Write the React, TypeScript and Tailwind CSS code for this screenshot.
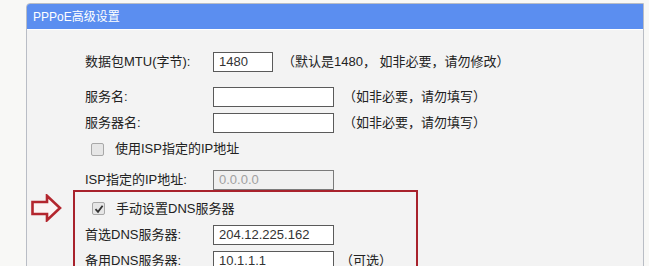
import React from "react";

const font = "font-['Liberation_Sans','Noto_Sans_CJK_SC',sans-serif]";

const TextBox = ({ value = "", width = "w-[121px]", disabled = false }: { value?: string; width?: string; disabled?: boolean }) => (
  <div
    className={`${width} h-[20px] border border-[#5a5a5a] flex items-center pl-[5px] text-[13px] ${
      disabled ? "bg-[#f0f0f0] text-[#a0a0a0] border-[#7a7a7a]" : "bg-white text-[#333]"
    }`}
  >
    {value}
  </div>
);

const CheckBox = ({ checked = false }: { checked?: boolean }) => (
  <div className="w-[13px] h-[13px] border border-[#a8a8a8] bg-[#e6e6e6] rounded-[2px] flex items-center justify-center">
    {checked && (
      <svg width="10" height="10" viewBox="0 0 10 10">
        <path d="M1.5 5.2 L4 7.8 L8.6 1.8" fill="none" stroke="#333" strokeWidth="1.8" />
      </svg>
    )}
  </div>
);

const Row = ({ label, children, h = "h-[26px]" }: { label: string; children: React.ReactNode; h?: string }) => (
  <div className={`flex items-center ${h}`}>
    <div className="w-[128px] shrink-0 text-[13px] text-[#222] whitespace-nowrap">{label}</div>
    {children}
  </div>
);

const Note = ({ text, ml = "ml-[9px]" }: { text: string; ml?: string }) => (
  <span className={`${ml} text-[13px] text-[#222] whitespace-nowrap`}>{text}</span>
);

export default function App() {
  return (
    <div className={`w-[649px] h-[266px] overflow-hidden bg-[#f8f8f6] ${font}`}>
      <div className="ml-[26px] mt-[3px] w-[618px] h-[300px] border border-[#b9bdc5] rounded-tl-[4px] bg-[#f3f3f3]">
        <div className="h-[26px] bg-[#5b8ef0] border-b border-white rounded-tl-[3px] flex items-center pl-[6px] text-[12px] text-white">
          PPPoE高级设置
        </div>

        <div className="pt-[19px]">
          <div className="pl-[58px]">
            <Row label="数据包MTU(字节):">
              <TextBox value="1480" width="w-[60px]" />
              <Note text="（默认是1480， 如非必要，请勿修改）" />
            </Row>
            <div className="h-[9px]" />
            <Row label="服务名:">
              <TextBox />
              <Note text="（如非必要，请勿填写）" />
            </Row>
            <Row label="服务器名:">
              <TextBox />
              <Note text="（如非必要，请勿填写）" />
            </Row>
            <div className="flex items-center h-[26px] pl-[6px] text-[13px] text-[#222]">
              <CheckBox />
              <span className="ml-[11px]">使用ISP指定的IP地址</span>
            </div>
            <div className="h-[7px]" />
            <Row label="ISP指定的IP地址:" h="h-[21px]">
              <TextBox value="0.0.0.0" disabled />
            </Row>
          </div>

          <div className="flex items-start">
            <svg className="ml-[4px] mt-[4px] shrink-0" width="31" height="28" viewBox="0 0 31 28">
              <path
                d="M1.5 8 H16 V1.8 L29 14 L16 26.2 V20 H1.5 Z"
                fill="#fbf4f4"
                stroke="#b3262e"
                strokeWidth="2.6"
                strokeLinejoin="miter"
              />
            </svg>
            <div className="ml-[11px] w-[345px] h-[100px] border-2 border-[#a8222c] pt-[3px] pl-[10px]">
              <div className="flex items-center h-[27px] pl-[7px] text-[13px] text-[#222]">
                <CheckBox checked />
                <span className="ml-[11px]">手动设置DNS服务器</span>
              </div>
              <Row label="首选DNS服务器:">
                <TextBox value="204.12.225.162" />
              </Row>
              <Row label="备用DNS服务器:">
                <TextBox value="10.1.1.1" />
                <Note text="（可选）" ml="ml-[6px]" />
              </Row>
            </div>
          </div>
        </div>
      </div>
    </div>
  );
}
